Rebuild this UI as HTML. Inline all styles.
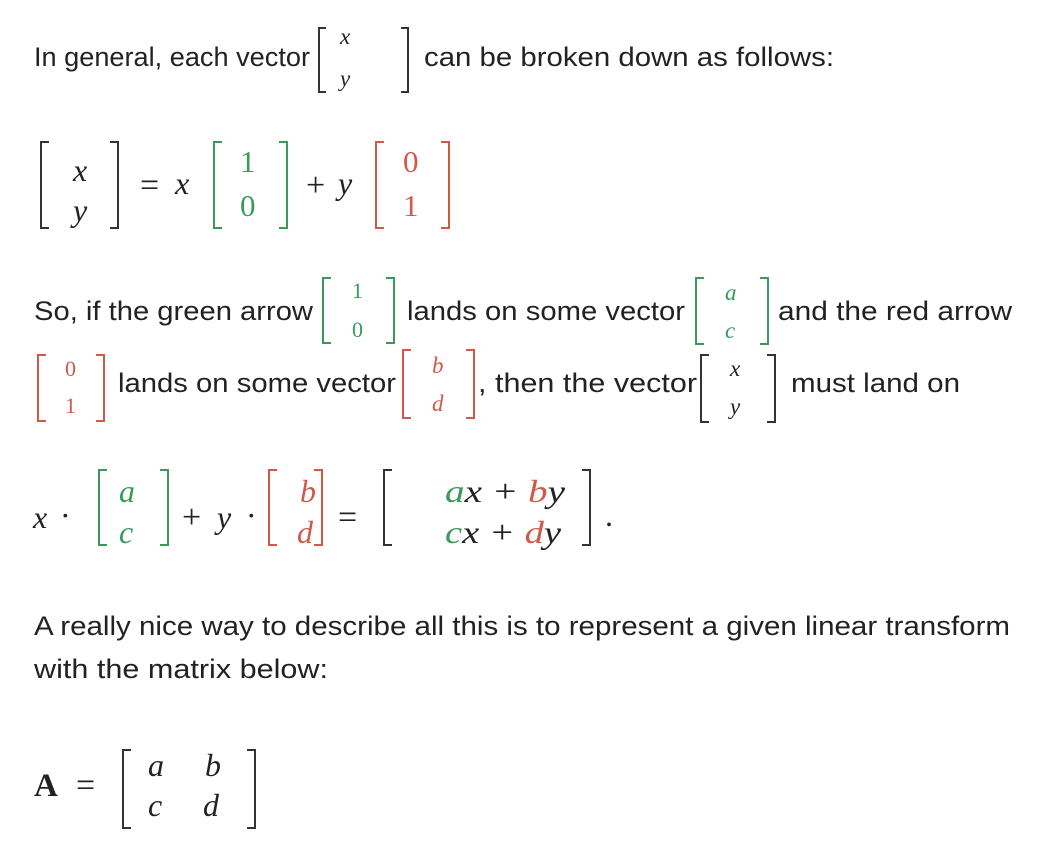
<!DOCTYPE html>
<html><head><meta charset="utf-8"><style>
html,body{margin:0;padding:0;background:#fff;}
svg{display:block}
.t{font-family:"Liberation Sans",sans-serif;font-size:27px;fill:#222;}
.m{font-family:"Liberation Serif",serif;font-style:italic;fill:#222;}
.n{font-family:"Liberation Serif",serif;fill:#222;}
.g{fill:#3a9a5c}.r{fill:#d05a4a}
.bk{fill:none;stroke:#333;stroke-width:2}
.bg{fill:none;stroke:#3a9a5c;stroke-width:2}
.br{fill:none;stroke:#d05a4a;stroke-width:2}
</style></head><body>
<svg width="1039" height="843" viewBox="0 0 1039 843" xmlns="http://www.w3.org/2000/svg">
<text class="t" x="34" y="66" textLength="276" lengthAdjust="spacingAndGlyphs">In general, each vector</text>
<path class="bk" d="M326 28H319V92H326 M401 28H408V92H401"/>
<text class="m" x="340" y="44" font-size="23">x</text>
<text class="m" x="340" y="86" font-size="23">y</text>
<text class="t" x="424" y="66" textLength="410" lengthAdjust="spacingAndGlyphs">can be broken down as follows:</text>

<path class="bk" d="M49 142H41V228H49 M110 142H118V228H110"/>
<text class="m" x="73" y="181" font-size="32">x</text>
<text class="m" x="73" y="221" font-size="32">y</text>
<text class="n" x="140" y="196" font-size="34">=</text>
<text class="m" x="175" y="194" font-size="32">x</text>
<path class="bg" d="M222 142H214V228H222 M279 142H287V228H279"/>
<text class="n g" x="240" y="172" font-size="31">1</text>
<text class="n g" x="240" y="216" font-size="31">0</text>
<text class="n" x="306" y="196" font-size="34">+</text>
<text class="m" x="338" y="194" font-size="32">y</text>
<path class="br" d="M384 142H376V228H384 M441 142H449V228H441"/>
<text class="n r" x="403" y="172" font-size="31">0</text>
<text class="n r" x="403" y="216" font-size="31">1</text>

<text class="t" x="34" y="320" textLength="279" lengthAdjust="spacingAndGlyphs">So, if the green arrow</text>
<path class="bg" d="M331 278H323V343H331 M386 278H394V343H386"/>
<text class="n g" x="352" y="298" font-size="22">1</text>
<text class="n g" x="352" y="337" font-size="22">0</text>
<text class="t" x="407" y="320" textLength="278" lengthAdjust="spacingAndGlyphs">lands on some vector</text>
<path class="bg" d="M704 278H696V344H704 M760 278H768V344H760"/>
<text class="m g" x="725" y="300" font-size="23">a</text>
<text class="m g" x="725" y="338" font-size="23">c</text>
<text class="t" x="778" y="320" textLength="234" lengthAdjust="spacingAndGlyphs">and the red arrow</text>

<path class="br" d="M46 355H38V421H46 M96 355H104V421H96"/>
<text class="n r" x="65" y="376" font-size="22">0</text>
<text class="n r" x="65" y="413" font-size="22">1</text>
<text class="t" x="118" y="392" textLength="278" lengthAdjust="spacingAndGlyphs">lands on some vector</text>
<path class="br" d="M411 350H403V418H411 M466 350H474V418H466"/>
<text class="m r" x="432" y="373" font-size="23">b</text>
<text class="m r" x="432" y="411" font-size="23">d</text>
<text class="t" x="478" y="392" textLength="219" lengthAdjust="spacingAndGlyphs">, then the vector</text>
<path class="bk" d="M709 355H701V422H709 M767 355H775V422H767"/>
<text class="m" x="730" y="376" font-size="23">x</text>
<text class="m" x="730" y="414" font-size="23">y</text>
<text class="t" x="791" y="392" textLength="169" lengthAdjust="spacingAndGlyphs">must land on</text>

<text class="m" x="33" y="528" font-size="32">x</text>
<text class="n" x="60" y="526" font-size="32">·</text>
<path class="bg" d="M107 470H99V545H107 M160 470H168V545H160"/>
<text class="m g" x="119" y="502" font-size="32">a</text>
<text class="m g" x="119" y="543" font-size="32">c</text>
<text class="n" x="182" y="528" font-size="34">+</text>
<text class="m" x="217" y="528" font-size="32">y</text>
<text class="n" x="246" y="526" font-size="32">·</text>
<path class="br" d="M277 470H269V545H277 M314 470H322V545H314"/>
<text class="m r" x="300" y="502" font-size="32">b</text>
<text class="m r" x="297" y="543" font-size="32">d</text>
<text class="n" x="338" y="528" font-size="34">=</text>
<path class="bk" d="M392 470H384V545H392 M582 470H590V545H582"/>
<text class="m" x="445" y="502" font-size="32" textLength="120" lengthAdjust="spacingAndGlyphs"><tspan class="g">a</tspan>x + <tspan class="r">b</tspan>y</text>
<text class="m" x="445" y="543" font-size="32" textLength="116" lengthAdjust="spacingAndGlyphs"><tspan class="g">c</tspan>x + <tspan class="r">d</tspan>y</text>
<text class="n" x="605" y="526" font-size="32">.</text>

<text class="t" x="34" y="635" textLength="976" lengthAdjust="spacingAndGlyphs">A really nice way to describe all this is to represent a given linear transform</text>
<text class="t" x="34" y="678" textLength="294" lengthAdjust="spacingAndGlyphs">with the matrix below:</text>

<text class="n" x="34" y="796" font-size="33" font-weight="bold">A</text>
<text class="n" x="76" y="796" font-size="34">=</text>
<path class="bk" d="M131 750H123V828H131 M247 750H255V828H247"/>
<text class="m" x="148" y="776" font-size="32">a</text>
<text class="m" x="148" y="816" font-size="32">c</text>
<text class="m" x="205" y="776" font-size="32">b</text>
<text class="m" x="203" y="816" font-size="32">d</text>
</svg>
</body></html>
